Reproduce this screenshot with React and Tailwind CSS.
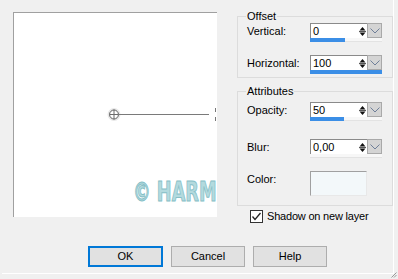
import React from "react";

function Spin() {
  return (
    <svg width="7" height="11" viewBox="0 0 7 11">
      <polygon points="0.5,4.5 3.5,1 6.5,4.5" fill="#111" />
      <line x1="0" y1="5.5" x2="7" y2="5.5" stroke="#555" strokeWidth="1" />
      <polygon points="0.5,6.5 3.5,10 6.5,6.5" fill="#111" />
    </svg>
  );
}

function Chevron() {
  return (
    <svg width="10" height="6" viewBox="0 0 10 6">
      <polyline points="0.5,0.5 5,5 9.5,0.5" fill="none" stroke="#6f7f99" strokeWidth="1" />
    </svg>
  );
}

function NumField({ value, bar }) {
  return (
    <div className="w-[72px] flex flex-col">
      <div className="flex h-[15px]">
        <div className="w-[47px] h-[15px] bg-white border-t border-l border-[#8a8a8a] pl-[2px] leading-[14px] text-black">
          {value}
        </div>
        <div className="w-[10px] h-[15px] bg-white border-t border-[#8a8a8a] flex items-center justify-center">
          <Spin />
        </div>
        <div className="w-[15px] h-[15px] bg-[#d4d4d4] border border-[#a9a9a9] flex items-center justify-center">
          <Chevron />
        </div>
      </div>
      <div className="h-[4px] w-[72px] bg-[#f7f7f7] border-b border-[#e3e3e3] flex">
        {bar ? <div className="h-[4px] bg-[#3b8ee6]" style={{ width: bar }} /> : null}
      </div>
    </div>
  );
}

function Row({ label, children, className = "" }) {
  return (
    <div className={"flex items-start " + className}>
      <div className="w-[63px] pt-[2px] leading-[13px]">{label}</div>
      {children}
    </div>
  );
}

export default function App() {
  return (
    <div className="w-[398px] h-[279px] bg-[#f0f0f0] relative overflow-hidden font-['Liberation_Sans',Arial,sans-serif] text-[11px] leading-[13px] text-black">
      <div className="flex pt-[12px] pl-[13px]">
        {/* Preview */}
        <div className="w-[204px] h-[205px] bg-white border-t border-l border-[#a0a0a0] relative overflow-hidden">
          <svg className="absolute left-[93px] top-[94px]" width="112" height="16" viewBox="0 0 112 16">
            <circle cx="7" cy="7.5" r="5" fill="#fff" stroke="#e8e8e8" strokeWidth="3" />
            <circle cx="7" cy="7.5" r="4.5" fill="none" stroke="#6a6a6a" strokeWidth="1" />
            <line x1="7" y1="2.5" x2="7" y2="12.5" stroke="#6a6a6a" strokeWidth="1" />
            <line x1="2.5" y1="7.5" x2="11.5" y2="7.5" stroke="#6a6a6a" strokeWidth="1" />
            <line x1="12" y1="7.5" x2="102" y2="7.5" stroke="#7a7a7a" strokeWidth="1" />
            <line x1="108.5" y1="1" x2="108.5" y2="5" stroke="#777" strokeWidth="1" />
            <line x1="108.5" y1="10" x2="108.5" y2="14" stroke="#777" strokeWidth="1" />
          </svg>
          <div className="absolute left-[119px] top-[166px] whitespace-nowrap font-['DejaVu_Sans',sans-serif] font-bold text-[26px] leading-[26px] text-[#b3dade] [-webkit-text-stroke:1px_#86bfc7] origin-left scale-x-[0.68]">
            © HARMI
          </div>
        </div>

        {/* Right column */}
        <div className="ml-[20px] w-[156px] -mt-[2px] flex flex-col">
          <fieldset className="border border-[#dcdcdc] pl-[9px] pb-[3px] h-[68px]">
            <legend className="px-[1px] -ml-[1px] leading-[13px]">Offset</legend>
            <Row label="Vertical:">
              <NumField value="0" bar="35px" />
            </Row>
            <Row label="Horizontal:" className="mt-[13px]">
              <NumField value="100" bar="72px" />
            </Row>
          </fieldset>

          <fieldset className="border border-[#dcdcdc] pl-[9px] mt-[7px] h-[121px]">
            <legend className="px-[1px] -ml-[1px] leading-[13px]">Attributes</legend>
            <Row label="Opacity:" className="mt-[4px]">
              <NumField value="50" bar="34px" />
            </Row>
            <Row label="Blur:" className="mt-[18px]">
              <NumField value="0,00" bar={null} />
            </Row>
            <Row label="Color:" className="mt-[13px]">
              <div className="w-[57px] h-[25px] bg-[#f3f8fa] border-t border-l border-[#a0a0a0] border-r border-b border-r-[#e8e8e8] border-b-[#e8e8e8]" />
            </Row>
          </fieldset>

          <div className="flex items-center mt-[4px] ml-[13px]">
            <div className="w-[13px] h-[13px] border border-[#333] bg-white flex items-center justify-center">
              <svg width="11" height="11" viewBox="0 0 11 11">
                <polyline points="1.5,5.5 4,8.5 9.5,2" fill="none" stroke="#222" strokeWidth="1.3" />
              </svg>
            </div>
            <span className="ml-[4px] tracking-[-0.2px]">Shadow on new layer</span>
          </div>
        </div>
      </div>

      {/* Buttons */}
      <div className="flex gap-[8px] pl-[88px] mt-[23px]">
        <div className="w-[75px] h-[21px] bg-[#e1e1e1] border-2 border-[#0078d7] flex items-center justify-center">OK</div>
        <div className="w-[74px] h-[21px] bg-[#e1e1e1] border border-[#adadad] flex items-center justify-center">Cancel</div>
        <div className="w-[74px] h-[21px] bg-[#e1e1e1] border border-[#adadad] flex items-center justify-center">Help</div>
      </div>

      <div className="absolute left-[2px] top-0 w-[392px] h-[274px] border-r border-b border-white pointer-events-none" />
      <svg className="absolute right-[1px] bottom-[1px]" width="6" height="6" viewBox="0 0 6 6">
        <line x1="5.5" y1="0.5" x2="0.5" y2="5.5" stroke="#999" />
        <line x1="5.5" y1="3" x2="3" y2="5.5" stroke="#999" />
      </svg>
    </div>
  );
}
